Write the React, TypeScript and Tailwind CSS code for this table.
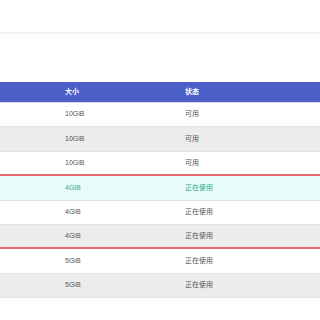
const rows = [
  { size: "10GiB", status: "可用", bg: "bg-white", tone: "normal", edge: "normal" },
  { size: "10GiB", status: "可用", bg: "bg-[#ececec]", tone: "normal", edge: "normal" },
  { size: "10GiB", status: "可用", bg: "bg-white", tone: "normal", edge: "red" },
  { size: "4GiB", status: "正在使用", bg: "bg-[#e8fdfa]", tone: "active", edge: "normal" },
  { size: "4GiB", status: "正在使用", bg: "bg-white", tone: "normal", edge: "normal" },
  { size: "4GiB", status: "正在使用", bg: "bg-[#ececec]", tone: "normal", edge: "red" },
  { size: "5GiB", status: "正在使用", bg: "bg-white", tone: "normal", edge: "normal" },
  { size: "5GiB", status: "正在使用", bg: "bg-[#ececec]", tone: "normal", edge: "normal" },
];

export default function App() {
  return (
    <div
      className="w-[320px] h-[320px] overflow-hidden bg-white"
      style={{ fontFamily: '"Liberation Sans", "Noto Sans CJK SC", sans-serif' }}
    >
      <div className="h-[33px] border-b border-[#ededed]" />
      <div className="h-[10px] bg-gradient-to-b from-[#f9f9f9] to-white" />
      <div className="h-[39px]" />

      <div className="flex h-[21px] items-center bg-[#4a5fc7] text-[7px] font-bold text-white border-b border-[#dcdcdc]">
        <div className="w-[65px]" />
        <div className="w-[120px]">大小</div>
        <div className="flex-1">状态</div>
      </div>

      {rows.map((r, i) => (
        <div
          key={i}
          className={`flex items-center text-[7px] ${r.bg} ${
            r.tone === "active" ? "text-[#2fa58a]" : "text-[#555]"
          } ${
            r.edge === "red"
              ? "h-[24.4px] border-b-2 border-[#e46a6a]"
              : "h-[24.4px] border-b border-[#e2e2e2]"
          }`}
        >
          <div className="w-[65px]" />
          <div className="w-[120px]">{r.size}</div>
          <div className="flex-1">{r.status}</div>
        </div>
      ))}
    </div>
  );
}
